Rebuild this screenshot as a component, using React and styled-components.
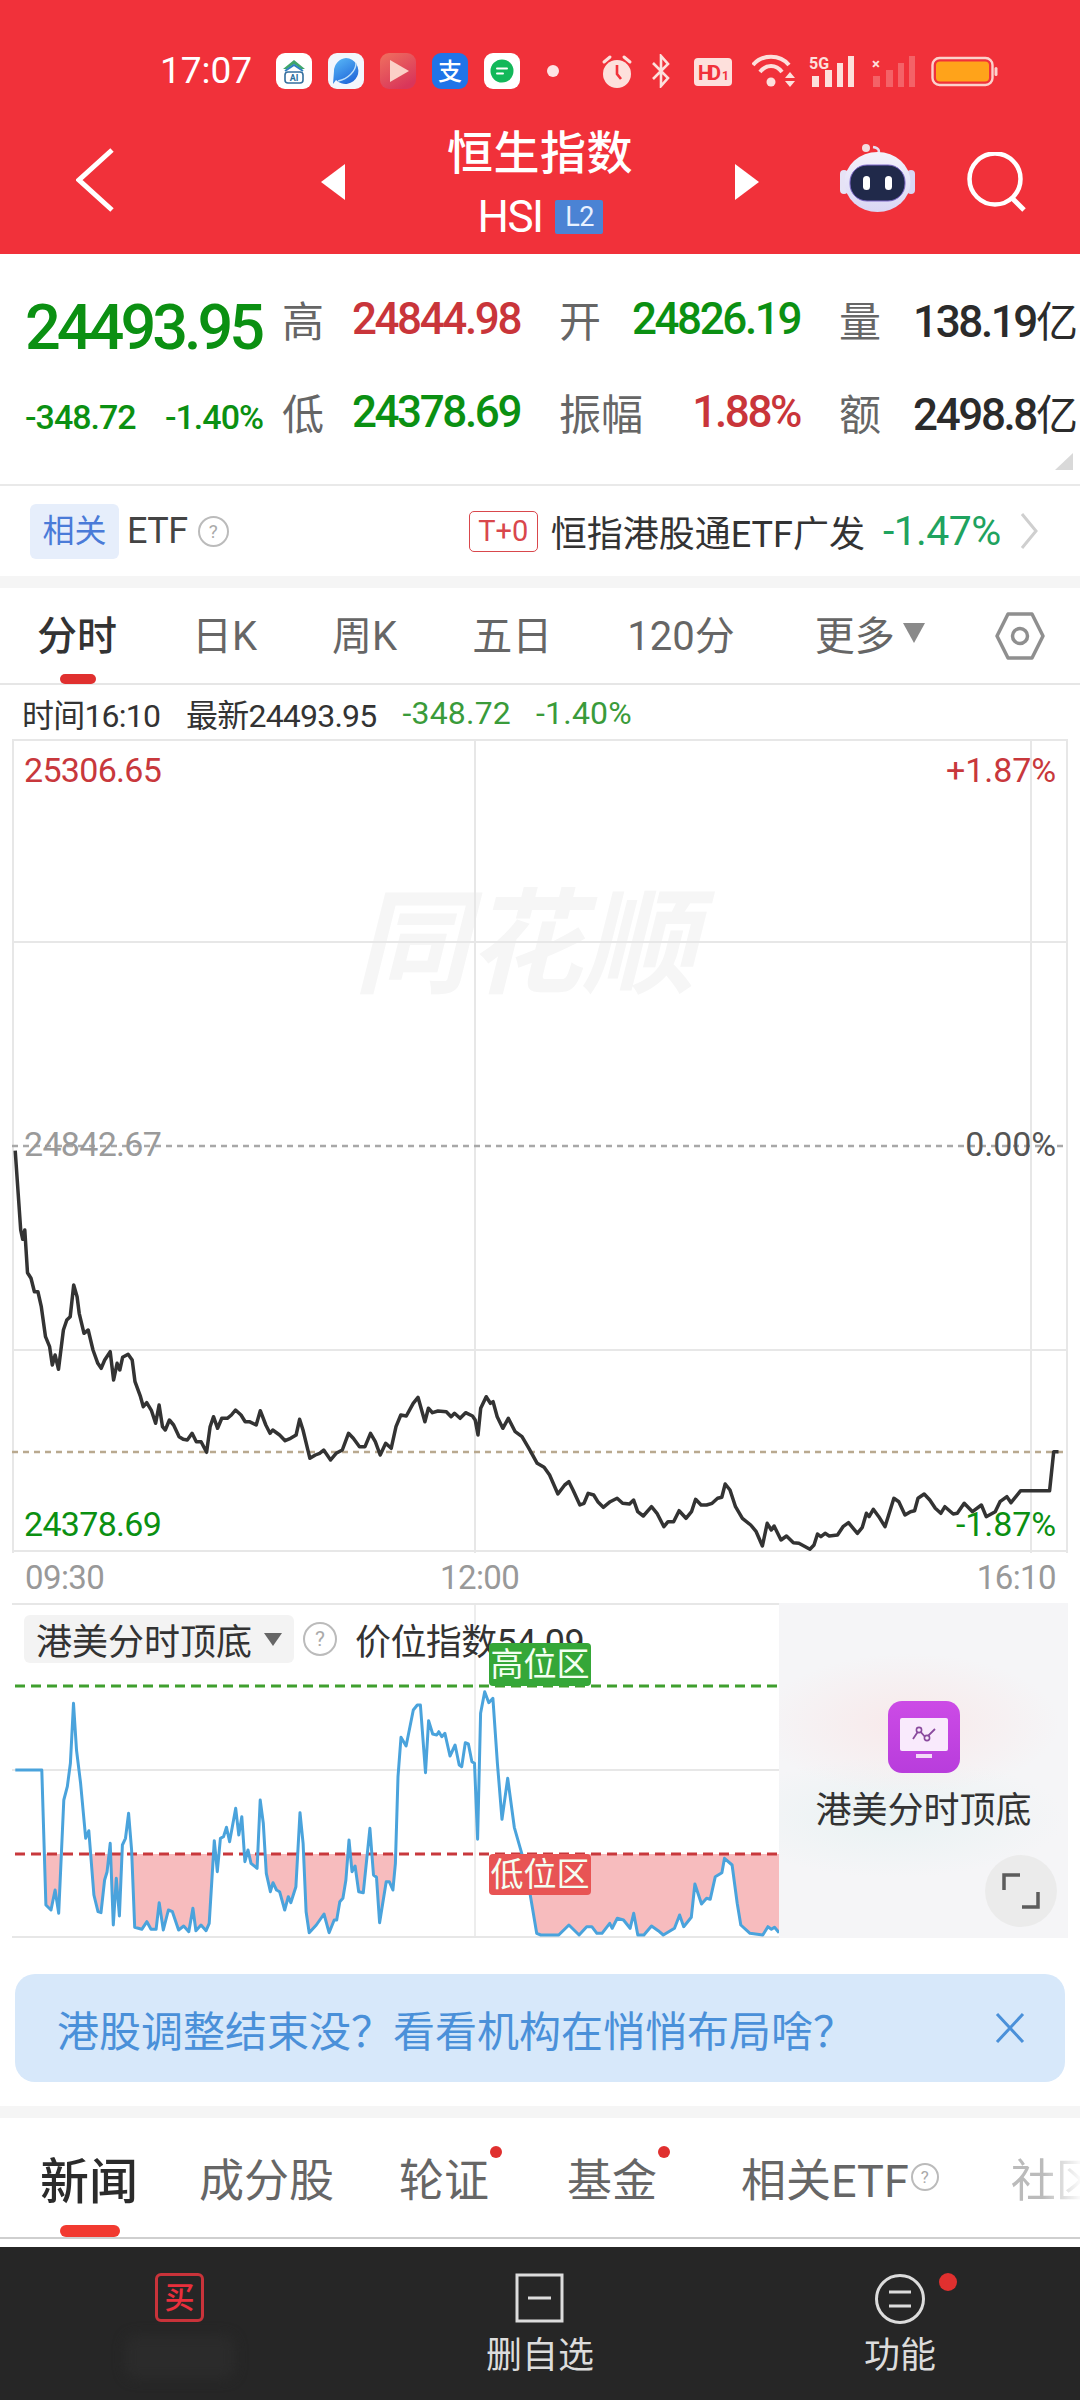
import React from "react";
import styled, { createGlobalStyle } from "styled-components";

const FONT = `Roboto, "Noto Sans CJK SC", sans-serif`;

const GlobalStyle = createGlobalStyle`
    html, body {
        margin: 0;
        padding: 0;
        background: #fff;
    }
    * {
        box-sizing: border-box;
    }
`;

const Page = styled.div`
    width: 1080px;
    height: 2400px;
    overflow: hidden;
    background: #fff;
    font-family: ${FONT};
    color: #333;
    display: flex;
    flex-direction: column;
`;

/* ---------- red header ---------- */

const Header = styled.header`
    height: 254px;
    background: #f1313a;
    color: #fff;
    flex: none;
`;

const StatusBar = styled.div`
    height: 112px;
    padding: 53px 0 0 160px;
    display: flex;
    align-items: flex-start;
`;

const Clock = styled.div`
    width: 92px;
    height: 36px;
    font-size: 37px;
    line-height: 36px;
    color: #fff;
    white-space: nowrap;
`;

const AppIcons = styled.div`
    display: flex;
    gap: 16px;
    margin-left: 24px;
`;

const AppIconBox = styled.svg`
    width: 36px;
    height: 36px;
    display: block;
`;

const NoticeDot = styled.div`
    width: 12px;
    height: 12px;
    border-radius: 50%;
    background: #fde4e4;
    margin: 12px 0 0 27px;
`;

const SysIcon = styled.svg`
    display: block;
    flex: none;
    margin-left: ${(p) => p.$ml}px;
    margin-top: 1px;
`;

const NavRow = styled.div`
    height: 142px;
    display: grid;
    grid-template-columns: 321px 24px 390px 24px 321px;
    align-items: start;
`;

const BackCell = styled.div`
    padding: 36px 0 0 76px;
`;

const ArrowCell = styled.div`
    padding-top: 52px;
`;

const TitleCell = styled.div`
    display: flex;
    flex-direction: column;
    align-items: center;
    padding-top: 15px;
`;

const Title = styled.div`
    font-size: 46px;
    line-height: 52px;
    font-weight: 500;
    letter-spacing: 0.5px;
`;

const SubTitle = styled.div`
    display: flex;
    align-items: center;
    gap: 13px;
    margin-top: 20px;
    padding-left: 1px;
`;

const Code = styled.span`
    font-size: 44px;
    line-height: 36px;
    letter-spacing: -1.5px;
`;

const LevelBadge = styled.span`
    width: 48px;
    height: 34px;
    background: #4b83d4;
    border-radius: 2px;
    color: #e8f1ff;
    font-size: 27px;
    line-height: 34px;
    text-align: center;
    letter-spacing: -0.5px;
`;

const NavTools = styled.div`
    display: flex;
    padding: 32px 0 0 81px;
    gap: 52px;
`;

/* ---------- quote block ---------- */

const Quote = styled.section`
    height: 232px;
    flex: none;
    padding: 18px 0 0 25px;
    border-bottom: 2px solid #e9e9e9;
    position: relative;
    display: grid;
    grid-template-columns: 218px 238px 241px 239px;
    grid-auto-rows: 93px;
    column-gap: 39px;
`;

const LastPrice = styled.div`
    font-size: 63px;
    line-height: 93px;
    padding-top: 9px;
    font-weight: 500;
    color: #0b9012;
    letter-spacing: -4px;
    white-space: nowrap;
`;

const Changes = styled.div`
    display: flex;
    justify-content: space-between;
    width: 238px;
    padding-top: 6px;
    font-size: 34px;
    line-height: 93px;
    font-weight: 500;
    letter-spacing: -1px;
    color: #0b9012;
    white-space: nowrap;
`;

const Stat = styled.div`
    display: flex;
    justify-content: space-between;
    align-items: center;
    white-space: nowrap;
`;

const StatLabel = styled.span`
    font-size: 42px;
    color: #666;
`;

const StatValue = styled.span`
    font-size: 44px;
    font-weight: 500;
    letter-spacing: -2.4px;
    color: ${(p) => p.$color || "#2b2b2b"};
`;

const Unit = styled.span`
    font-weight: 400;
    letter-spacing: 0;
    font-size: 42px;
`;

const CornerMark = styled.div`
    position: absolute;
    right: 7px;
    top: 199px;
    width: 0;
    height: 0;
    border-left: 18px solid transparent;
    border-bottom: 17px solid #d9d9d9;
`;

/* ---------- ETF row ---------- */

const EtfRow = styled.section`
    height: 90px;
    flex: none;
    display: flex;
    align-items: center;
    padding: 0 0 0 30px;
`;

const EtfTag = styled.div`
    width: 89px;
    height: 55px;
    border-radius: 6px;
    background: #e6eefb;
    color: #4a7bd8;
    font-size: 32px;
    line-height: 55px;
    text-align: center;
`;

const EtfLabel = styled.div`
    margin-left: 8px;
    font-size: 36px;
    color: #444;
    letter-spacing: -0.5px;
`;

const HelpMark = styled.span`
    display: inline-flex;
    align-items: center;
    justify-content: center;
    flex: none;
    width: ${(p) => p.$size}px;
    height: ${(p) => p.$size}px;
    border: 2px solid #bbb;
    border-radius: 50%;
    color: #aaa;
    font-size: ${(p) => Math.round(p.$size * 0.62)}px;
    margin-left: ${(p) => p.$ml}px;
`;

const TZeroTag = styled.div`
    margin-left: 240px;
    width: 69px;
    height: 41px;
    border: 1px solid #d9474c;
    border-radius: 5px;
    color: #d9474c;
    font-size: 29px;
    line-height: 39px;
    text-align: center;
`;

const EtfName = styled.div`
    margin-left: 13px;
    font-size: 36px;
    color: #333;
    white-space: nowrap;
`;

const EtfChange = styled.div`
    margin-left: 18px;
    font-size: 41px;
    color: #1fa35f;
    letter-spacing: -0.6px;
    white-space: nowrap;
`;

const SectionGap = styled.div`
    height: 12px;
    flex: none;
    background: #f5f5f5;
`;

/* ---------- period tabs ---------- */

const PeriodTabs = styled.nav`
    height: 97px;
    flex: none;
    position: relative;
    display: flex;
    align-items: flex-start;
    gap: 75px;
    padding: 24px 0 0 37px;
    border-bottom: 2px solid #e6e6e6;
`;

const PeriodTab = styled.div`
    font-size: 40px;
    line-height: 50px;
    color: ${(p) => (p.$active ? "#333" : "#666")};
    font-weight: ${(p) => (p.$active ? 500 : 400)};
    margin-left: ${(p) => p.$ml || 0}px;
    white-space: nowrap;
    display: flex;
    align-items: center;
`;

const MoreArrow = styled.span`
    width: 0;
    height: 0;
    margin: 0 0 8px 8px;
    border-left: 11px solid transparent;
    border-right: 11px solid transparent;
    border-top: 20px solid #8a8a8a;
`;

const PeriodIndicator = styled.div`
    position: absolute;
    left: 60px;
    bottom: -1px;
    width: 36px;
    height: 10px;
    border-radius: 5px;
    background: #e0302f;
`;

const SettingsIcon = styled.svg`
    position: absolute;
    left: 995px;
    top: 24px;
`;

const InfoRow = styled.div`
    height: 54px;
    flex: none;
    display: flex;
    align-items: center;
    padding: 2px 0 0 22px;
    font-size: 32px;
    color: #333;
    letter-spacing: -0.8px;
    white-space: nowrap;
`;

const InfoItem = styled.span`
    margin-left: ${(p) => p.$ml || 0}px;
    color: ${(p) => p.$color || "#333"};
    ${(p) => p.$color && "letter-spacing: 0.2px;"}
`;

/* ---------- main chart ---------- */

const ChartBox = styled.div`
    position: relative;
    flex: none;
    width: 1056px;
    height: 814px;
    margin-left: 12px;
`;

const ChartSvg = styled.svg`
    position: absolute;
    left: 0;
    top: 0;
`;

const Watermark = styled.div`
    position: absolute;
    left: 342px;
    top: 141px;
    font-size: 114px;
    line-height: 130px;
    font-weight: 700;
    font-style: italic;
    color: #f6f6f6;
    white-space: nowrap;
`;

const ChartLabel = styled.div`
    position: absolute;
    top: ${(p) => p.$top}px;
    ${(p) => (p.$right ? "right: 12px; letter-spacing: -0.1px;" : "left: 12px; letter-spacing: -0.7px;")}
    font-size: 34px;
    line-height: 40px;
    color: ${(p) => p.$color};
`;

const AxisRow = styled.div`
    height: 50px;
    flex: none;
    display: grid;
    grid-template-columns: 415px 1fr auto;
    padding: 5px 24px 0 25px;
    font-size: 33px;
    line-height: 40px;
    letter-spacing: -0.6px;
    color: #999;
`;

/* ---------- indicator chart ---------- */

const SubChart = styled.div`
    position: relative;
    flex: none;
    height: 335px;
    margin-left: 12px;
    width: 1056px;
    display: flex;
`;

const SubPlot = styled.div`
    position: relative;
    width: 767px;
    height: 335px;
    flex: none;
`;

const IndicatorHead = styled.div`
    position: absolute;
    left: 12px;
    top: 10px;
    display: flex;
    align-items: center;
`;

const IndicatorSelect = styled.div`
    width: 270px;
    height: 48px;
    border-radius: 6px;
    background: #f3f3f3;
    display: flex;
    align-items: center;
    padding-left: 12px;
    font-size: 36px;
    color: #333;
`;

const SelectArrow = styled.span`
    width: 0;
    height: 0;
    margin-left: 12px;
    border-left: 9px solid transparent;
    border-right: 9px solid transparent;
    border-top: 13px solid #666;
`;

const IndicatorValue = styled.div`
    margin-left: 18px;
    font-size: 36px;
    color: #333;
    letter-spacing: -0.6px;
    white-space: nowrap;
`;

const ZoneBadge = styled.div`
    position: absolute;
    left: 477px;
    top: ${(p) => p.$top}px;
    width: 102px;
    height: ${(p) => p.$h}px;
    background: ${(p) => p.$bg};
    border-radius: 4px;
    color: #f4fff2;
    font-size: 33px;
    line-height: ${(p) => p.$h}px;
    text-align: center;
`;

const SidePanel = styled.div`
    position: relative;
    width: 289px;
    height: 335px;
    background:
        radial-gradient(ellipse 150px 70px at 45% 36%, #f8e9ea 0%, rgba(248, 233, 234, 0) 100%),
        radial-gradient(ellipse 170px 60px at 40% 64%, #e9f2f3 0%, rgba(233, 242, 243, 0) 100%),
        #f5f5f7;
    display: flex;
    flex-direction: column;
    align-items: center;
    padding-top: 98px;
`;

const SideLabel = styled.div`
    margin-top: 16px;
    font-size: 36px;
    line-height: 44px;
    color: #333;
`;

const ExpandButton = styled.div`
    position: absolute;
    right: 11px;
    bottom: 11px;
    width: 72px;
    height: 72px;
    border-radius: 50%;
    background: #ebebeb;
    display: flex;
    align-items: center;
    justify-content: center;
`;

/* ---------- banner ---------- */

const Banner = styled.div`
    flex: none;
    width: 1050px;
    height: 108px;
    margin: 36px 0 24px 15px;
    border-radius: 20px;
    background: #d7e8fa;
    display: flex;
    align-items: center;
    justify-content: space-between;
    padding: 0 40px 0 42px;
    font-size: 42px;
    color: #4a90d9;
    white-space: nowrap;
`;

/* ---------- bottom tabs ---------- */

const NewsTabs = styled.nav`
    position: relative;
    flex: none;
    height: 121px;
    display: flex;
    align-items: flex-start;
    padding: 29px 0 0 40px;
    border-bottom: 2px solid #cfcfcf;
    overflow: hidden;
`;

const NewsTab = styled.div`
    position: relative;
    flex: none;
    display: flex;
    align-items: center;
    height: 60px;
    margin-left: ${(p) => p.$ml || 0}px;
    font-size: ${(p) => (p.$active ? 49 : 45)}px;
    font-weight: ${(p) => (p.$active ? 500 : 400)};
    color: ${(p) => (p.$active ? "#2b2b2b" : "#666")};
    white-space: nowrap;
    ${(p) =>
        p.$fade &&
        `color: #bbb;
        -webkit-mask-image: linear-gradient(90deg, #000 35%, transparent 80%);
        mask-image: linear-gradient(90deg, #000 35%, transparent 80%);`}
`;

const RedDot = styled.span`
    position: absolute;
    right: -13px;
    top: -1px;
    width: 12px;
    height: 12px;
    border-radius: 50%;
    background: #e0302f;
`;

const NewsIndicator = styled.div`
    position: absolute;
    left: 60px;
    bottom: 0;
    width: 60px;
    height: 12px;
    border-radius: 6px;
    background: #f23a30;
`;

const TabFooterGap = styled.div`
    height: 8px;
    flex: none;
    background: #fff;
`;

const BottomBar = styled.footer`
    flex: 1;
    background: #262626;
    display: grid;
    grid-template-columns: 360px 360px 360px;
    padding-top: 26px;
`;

const BarItem = styled.div`
    position: relative;
    display: flex;
    flex-direction: column;
    align-items: center;
    color: #dcdcdc;
    font-size: 36px;
    line-height: 50px;
`;

const BarIconWrap = styled.div`
    width: 50px;
    height: 50px;
    margin-bottom: 8px;
    position: relative;
`;

const BuyIcon = styled.div`
    width: 49px;
    height: 49px;
    border: 3px solid #c9333a;
    border-radius: 6px;
    color: #ea2f3c;
    font-size: 30px;
    line-height: 43px;
    font-weight: 500;
    text-align: center;
`;

const BlurredLabel = styled.div`
    width: 110px;
    height: 44px;
    margin-top: 4px;
    border-radius: 12px;
    background: #2b2b2b;
    filter: blur(6px);
`;

const BadgeDot = styled.span`
    position: absolute;
    left: 64px;
    top: 0;
    width: 18px;
    height: 18px;
    border-radius: 50%;
    background: #e0302f;
`;

/* ---------- data ---------- */

const MAIN_LINE = [[22,92],[30,330],[33,358],[36,330],[40,458],[45,475],[50,515],[55,515],[60,560],[66,650],[72,680],[76,735],[80,705],[85,748],[92,630],[97,600],[102,590],[107,495],[112,530],[115,580],[122,640],[128,630],[135,690],[142,730],[147,745],[152,720],[160,695],[165,780],[170,730],[174,750],[178,712],[186,703],[192,720],[196,785],[204,830],[208,860],[213,848],[220,872],[226,910],[231,855],[236,920],[240,930],[246,900],[252,915],[260,950],[266,958],[272,960],[279,940],[285,965],[292,965],[300,997],[305,920],[310,890],[316,925],[322,895],[330,895],[336,885],[342,870],[350,885],[356,905],[362,905],[372,915],[378,872],[386,915],[392,940],[396,930],[406,945],[414,962],[422,955],[430,945],[435,898],[440,930],[450,1015],[458,1005],[464,1000],[470,990],[480,1020],[488,1000],[497,990],[506,940],[513,955],[522,980],[530,980],[538,940],[545,965],[552,1005],[560,970],[568,985],[575,920],[582,885],[590,888],[600,850],[607,832],[617,905],[622,865],[628,878],[636,873],[648,875],[655,890],[660,880],[668,895],[676,878],[686,888],[690,900],[694,945],[698,865],[706,830],[712,850],[716,845],[722,890],[730,925],[738,895],[748,935],[758,950],[768,985],[780,1030],[790,1042],[798,1065],[810,1122],[820,1095],[826,1085],[832,1110],[842,1155],[848,1150],[854,1120],[862,1125],[868,1145],[876,1162],[886,1145],[896,1135],[904,1150],[914,1152],[920,1140],[926,1175],[934,1188],[946,1160],[954,1180],[964,1220],[970,1205],[978,1205],[986,1172],[996,1195],[1004,1175],[1010,1138],[1018,1155],[1026,1155],[1034,1150],[1042,1135],[1048,1132],[1053,1092],[1060,1110],[1068,1160],[1078,1195],[1090,1215],[1098,1235],[1107,1278],[1114,1210],[1120,1230],[1124,1218],[1134,1260],[1142,1248],[1152,1268],[1160,1270],[1176,1288],[1182,1275],[1187,1242],[1192,1250],[1198,1240],[1204,1248],[1216,1245],[1224,1220],[1232,1208],[1245,1240],[1252,1222],[1258,1180],[1262,1190],[1268,1168],[1276,1190],[1285,1220],[1298,1135],[1305,1145],[1314,1185],[1322,1175],[1328,1172],[1333,1135],[1342,1122],[1350,1140],[1358,1165],[1366,1180],[1372,1160],[1384,1182],[1390,1180],[1400,1150],[1412,1175],[1425,1155],[1432,1190],[1445,1175],[1452,1145],[1462,1130],[1468,1148],[1482,1112],[1524,1112],[1530,995],[1537,995]];

const SUB_LINE = [[30,540],[82,540],[90,945],[100,960],[108,900],[115,970],[125,630],[132,590],[138,520],[144,340],[150,480],[158,580],[168,745],[174,722],[184,915],[192,965],[198,968],[205,870],[210,845],[216,760],[222,1005],[228,865],[234,978],[240,765],[246,745],[252,670],[258,780],[264,1012],[278,1018],[288,995],[296,1018],[306,1018],[312,938],[320,1020],[330,960],[338,965],[350,1020],[360,1008],[370,1025],[378,955],[384,1022],[394,1005],[404,1022],[410,1000],[420,752],[426,845],[432,745],[438,740],[444,712],[450,755],[462,655],[468,735],[474,680],[480,815],[486,780],[492,820],[504,835],[510,630],[516,700],[522,850],[530,905],[535,878],[542,900],[548,905],[558,960],[565,920],[570,938],[580,890],[588,668],[594,760],[600,965],[606,1028],[620,1005],[635,972],[645,1028],[655,990],[660,990],[666,935],[672,925],[678,870],[684,750],[690,845],[696,828],[703,905],[712,908],[725,715],[732,855],[738,862],[744,998],[757,875],[763,875],[770,900],[775,820],[780,560],[786,442],[796,468],[810,360],[818,345],[824,345],[834,548],[840,392],[848,432],[856,435],[860,425],[866,440],[872,430],[882,498],[892,465],[900,525],[905,530],[912,458],[918,462],[925,515],[930,520],[936,748],[942,370],[950,305],[958,338],[966,325],[975,520],[984,688],[995,565],[1008,712],[1030,830],[1052,1030],[1060,1035],[1095,1035],[1115,1005],[1135,1035],[1150,1010],[1160,1010],[1170,1030],[1180,1030],[1195,1000],[1200,1015],[1210,985],[1222,990],[1235,1015],[1242,970],[1250,1035],[1262,1035],[1277,1008],[1290,1022],[1300,1035],[1322,1015],[1332,975],[1340,1010],[1355,982],[1362,882],[1375,942],[1385,925],[1392,928],[1402,860],[1415,848],[1420,805],[1435,825],[1445,940],[1452,1005],[1470,1030],[1495,1035],[1505,1010],[1512,1018],[1518,1012],[1527,1028]];

// traced from crops of the reference, so scale back to chart pixels
const mainPoints = MAIN_LINE.map(([x, y]) => `${(x / 1.452 - 12).toFixed(1)},${(y / 3 + 381).toFixed(1)}`).join(" ");
const subCoords = SUB_LINE.map(([x, y]) => [(x / 1.96 - 12).toFixed(1), (y / 3 - 13).toFixed(1)]);
const subPoints = subCoords.map((c) => c.join(",")).join(" ");
const subArea = `${subPoints} 767,335 767,0 ${subCoords[0][0]},0`;

const PERIODS = ["日K", "周K", "五日", "120分"];

/* ---------- drawings ---------- */

const HomeAiIcon = () => (
    <AppIconBox viewBox="0 0 36 36">
        <rect width="36" height="36" rx="9" fill="#fff" />
        <path d="M7 16 L18 7 L29 16 L25 16 L18 11 L11 16Z" fill="#3fa66b" />
        <path d="M9 18 L18 12 L27 18" fill="none" stroke="#2f7fc4" strokeWidth="2" />
        <rect x="9" y="19" width="18" height="11" rx="3" fill="none" stroke="#356f9e" strokeWidth="1.6" />
        <text x="18" y="28" fontSize="9" fontWeight="700" fill="#2c6f9f" textAnchor="middle" fontFamily="Roboto, sans-serif">AI</text>
    </AppIconBox>
);

const BrowserIcon = () => (
    <AppIconBox viewBox="0 0 36 36">
        <defs>
            <linearGradient id="browserFill" x1="0.2" y1="0" x2="0.8" y2="1">
                <stop offset="0" stopColor="#56b4f6" />
                <stop offset="1" stopColor="#1d63d8" />
            </linearGradient>
        </defs>
        <rect width="36" height="36" rx="9" fill="#f2f6fd" />
        <path d="M18 5 A13 13 0 1 1 8 27 L5 31 L6 18 A13 13 0 0 1 18 5Z" fill="url(#browserFill)" />
        <path d="M28 10 C28 18 20 26 10 28" fill="none" stroke="#bfe0fb" strokeWidth="1.4" />
    </AppIconBox>
);

const PlayerIcon = () => (
    <AppIconBox viewBox="0 0 36 36">
        <defs>
            <linearGradient id="playerFill" x1="0" y1="0" x2="0.6" y2="1">
                <stop offset="0" stopColor="#f0705f" />
                <stop offset="1" stopColor="#d9365a" />
            </linearGradient>
        </defs>
        <rect width="36" height="36" rx="9" fill="url(#playerFill)" />
        <path d="M10 7 L29 18 L10 29Z" fill="#fbd0c8" />
    </AppIconBox>
);

const AlipayIcon = () => (
    <AppIconBox viewBox="0 0 36 36">
        <rect width="36" height="36" rx="9" fill="#1f74e8" />
        <text x="18" y="27" fontSize="24" fontWeight="500" fill="#fff" textAnchor="middle" fontFamily="'Noto Sans CJK SC', sans-serif">支</text>
    </AppIconBox>
);

const ChatIcon = () => (
    <AppIconBox viewBox="0 0 36 36">
        <rect width="36" height="36" rx="9" fill="#fff" />
        <circle cx="18" cy="18" r="11.5" fill="#12b85a" />
        <rect x="12" y="14.5" width="12" height="2" rx="1" fill="#fff" />
        <rect x="12" y="19.5" width="8" height="2" rx="1" fill="#fff" />
    </AppIconBox>
);

const AlarmIcon = () => (
    <SysIcon $ml={42} width="32" height="35" viewBox="0 0 32 35">
        <circle cx="16" cy="20" r="14" fill="#fde0dc" />
        <path d="M16 11 V20 L20 25" fill="none" stroke="#f1313a" strokeWidth="2.6" />
        <path d="M3 8 L9 3 M29 8 L23 3" stroke="#fde0dc" strokeWidth="3" strokeLinecap="round" />
    </SysIcon>
);

const BluetoothIcon = () => (
    <SysIcon $ml={18} width="20" height="34" viewBox="0 0 20 34">
        <path d="M2 9 L17 24 L10 32 V2 L17 10 L2 25" fill="none" stroke="#fde0dc" strokeWidth="2.6" />
    </SysIcon>
);

const HdIcon = () => (
    <SysIcon $ml={23} width="38" height="34" viewBox="0 0 38 34">
        <rect y="4" width="38" height="28" rx="4" fill="#fde0dc" />
        <text x="4" y="26" fontSize="20" fontWeight="700" fill="#f1313a" fontFamily="Roboto, sans-serif" textLength="23">HD</text>
        <text x="28" y="26" fontSize="12" fontWeight="700" fill="#f1313a" fontFamily="Roboto, sans-serif">1</text>
    </SysIcon>
);

const WifiIcon = () => (
    <SysIcon $ml={20} width="44" height="34" viewBox="0 0 44 34">
        <path d="M1 11 C10 0 28 0 37 11" fill="none" stroke="#fde0dc" strokeWidth="4" />
        <path d="M8 18 C14 10 24 10 30 18" fill="none" stroke="#fde0dc" strokeWidth="4" />
        <circle cx="19" cy="28" r="4.5" fill="#fde0dc" />
        <path d="M33 24 L38 18 L43 24Z M33 27 L43 27 L38 33Z" fill="#fde0dc" />
    </SysIcon>
);

const SignalIcon = ({ ml, dim, label }) => (
    <SysIcon $ml={ml} width="46" height="34" viewBox="0 0 46 34">
        <g fill="#fde0dc" opacity={dim ? 0.28 : 1}>
            <rect x="3" y="22" width="7" height="11" />
            <rect x="16" y="16" width="7" height="17" />
            <rect x="28" y="9" width="6" height="24" />
            <rect x="39" y="2" width="6" height="31" />
        </g>
        <text x={dim ? 2 : 0} y="15" fontSize={dim ? 15 : 16} fontWeight="700" fill="#fde0dc" fontFamily="Roboto, sans-serif">{label}</text>
    </SysIcon>
);

const BatteryIcon = () => (
    <SysIcon $ml={15} width="67" height="34" viewBox="0 0 67 34">
        <rect x="1.5" y="4" width="60" height="27" rx="7" fill="none" stroke="#fcd2cc" strokeWidth="2.4" />
        <rect x="5" y="7.5" width="53" height="20" rx="4" fill="#ffa31a" />
        <rect x="63.5" y="13" width="3" height="9" rx="1.5" fill="#fcd2cc" />
    </SysIcon>
);

const BackIcon = () => (
    <svg width="38" height="64" viewBox="0 0 38 64" style={{ display: "block" }}>
        <path d="M36 2 L3 32 L36 62" fill="none" stroke="#fff" strokeWidth="5" />
    </svg>
);

const SideArrow = ({ flip }) => (
    <svg width="24" height="36" viewBox="0 0 24 36" style={{ display: "block" }}>
        <path d={flip ? "M0 0 L24 18 L0 36Z" : "M24 0 L0 18 L24 36Z"} fill="#fff" />
    </svg>
);

const RobotIcon = () => (
    <svg width="75" height="70" viewBox="0 0 75 70" style={{ display: "block" }}>
        <defs>
            <linearGradient id="robotShell" x1="0" y1="0" x2="0" y2="1">
                <stop offset="0" stopColor="#f4f2fb" />
                <stop offset="1" stopColor="#d9d6f4" />
            </linearGradient>
        </defs>
        <path d="M37 12 C40 8 40 4 33 3" fill="none" stroke="#e6dff0" strokeWidth="2.5" />
        <circle cx="26" cy="4" r="4" fill="#f3dcdf" />
        <rect x="0" y="26" width="8" height="24" rx="4" fill="#e6e3f5" />
        <rect x="67" y="26" width="8" height="24" rx="4" fill="#d9d6f4" />
        <ellipse cx="37.5" cy="38" rx="33" ry="30" fill="url(#robotShell)" />
        <rect x="10" y="21" width="55" height="36" rx="17" fill="#20294a" stroke="#7d68c9" strokeWidth="1" />
        <rect x="23" y="32" width="7" height="14" rx="3.5" fill="#fff" />
        <rect x="45" y="32" width="7" height="14" rx="3.5" fill="#fff" />
    </svg>
);

const SearchIcon = () => (
    <svg width="62" height="62" viewBox="0 0 62 62" style={{ display: "block", marginTop: 8 }}>
        <circle cx="28" cy="27" r="25.5" fill="none" stroke="#fff" strokeWidth="4.5" />
        <path d="M45 46 L57 58" stroke="#fff" strokeWidth="5" />
    </svg>
);

const ChevronIcon = () => (
    <svg width="20" height="38" viewBox="0 0 20 38" style={{ display: "block", marginLeft: 18 }}>
        <path d="M3 2 L17 19 L3 36" fill="none" stroke="#cfcfcf" strokeWidth="3" />
    </svg>
);

const HexIcon = () => (
    <SettingsIcon width="50" height="48" viewBox="0 0 50 48">
        <path d="M13 2 H37 L48 24 L37 46 H13 L2 24Z" fill="none" stroke="#8f8f8f" strokeWidth="3.5" strokeLinejoin="round" />
        <circle cx="25" cy="24" r="7.5" fill="none" stroke="#8f8f8f" strokeWidth="3.5" />
    </SettingsIcon>
);

const MainChartDrawing = () => (
    <ChartSvg width="1056" height="814" viewBox="0 0 1056 814">
        <g stroke="#e7e7e7" strokeWidth="2" fill="none">
            <path d="M0 1 H1056" />
            <path d="M0 203 H1056" />
            <path d="M0 611 H1056" />
            <path d="M0 812 H1056" />
            <path d="M463 0 V814" />
            <path d="M1019 0 V814" />
            <path d="M1 0 V814" />
            <path d="M1055 0 V814" />
        </g>
        <path d="M0 407 H1056" stroke="#a8a8a8" strokeWidth="2.5" strokeDasharray="6 5" fill="none" />
        <path d="M0 713 H1056" stroke="#b9a98f" strokeWidth="2.5" strokeDasharray="6 5" fill="none" />
        <polyline points={mainPoints} fill="none" stroke="#333" strokeWidth="3.5" strokeLinejoin="round" />
    </ChartSvg>
);

const SubChartDrawing = () => (
    <ChartSvg width="767" height="335" viewBox="0 0 767 335">
        <defs>
            <clipPath id="lowZone">
                <rect x="0" y="251" width="767" height="84" />
            </clipPath>
        </defs>
        <g stroke="#e7e7e7" strokeWidth="2" fill="none">
            <path d="M0 1 H767" />
            <path d="M0 167 H767" />
            <path d="M0 334 H767" />
            <path d="M463 0 V335" strokeWidth="1.5" />
        </g>
        <polygon points={subArea} fill="#f7bcbe" clipPath="url(#lowZone)" />
        <path d="M3 83 H767" stroke="#3f9f2e" strokeWidth="3" strokeDasharray="10 6" fill="none" />
        <path d="M3 251 H767" stroke="#c8383c" strokeWidth="3" strokeDasharray="10 6" fill="none" />
        <polyline points={subPoints} fill="none" stroke="#4aa3dc" strokeWidth="3" strokeLinejoin="round" />
    </ChartSvg>
);

const MonitorBadge = () => (
    <svg width="72" height="72" viewBox="0 0 72 72" style={{ display: "block" }}>
        <defs>
            <linearGradient id="badgeFill" x1="0" y1="0" x2="0" y2="1">
                <stop offset="0" stopColor="#cc4be6" />
                <stop offset="1" stopColor="#b83ddc" />
            </linearGradient>
        </defs>
        <rect width="72" height="72" rx="14" fill="url(#badgeFill)" />
        <rect x="12" y="17" width="48" height="33" rx="2" fill="#f9eafc" />
        <rect x="28" y="53" width="16" height="4" fill="#f3d9f8" />
        <path d="M25 38 L31 29 L38 37 L47 28" fill="none" stroke="#8a4a9e" strokeWidth="1.8" />
        <circle cx="31" cy="29" r="2.6" fill="#f9eafc" stroke="#8a4a9e" strokeWidth="1.6" />
        <circle cx="39" cy="37" r="2.6" fill="#f9eafc" stroke="#8a4a9e" strokeWidth="1.6" />
    </svg>
);

const ExpandIcon = () => (
    <svg width="38" height="38" viewBox="0 0 38 38" style={{ display: "block" }}>
        <path d="M2 18 V3 H18 M36 20 V35 H20" fill="none" stroke="#5c5c5c" strokeWidth="3.5" />
    </svg>
);

const CloseIcon = () => (
    <svg width="30" height="32" viewBox="0 0 30 32" style={{ display: "block" }}>
        <path d="M2 2 L28 30 M28 2 L2 30" stroke="#4a90d9" strokeWidth="3" />
    </svg>
);

const RemoveWatchIcon = () => (
    <svg width="50" height="50" viewBox="0 0 50 50" style={{ display: "block" }}>
        <rect x="2" y="2" width="45" height="46" fill="none" stroke="#dcdcdc" strokeWidth="3" />
        <path d="M13 25 H36" stroke="#dcdcdc" strokeWidth="3" />
    </svg>
);

const MenuIcon = () => (
    <svg width="50" height="52" viewBox="0 0 50 52" style={{ display: "block" }}>
        <circle cx="25" cy="26" r="23.5" fill="none" stroke="#dcdcdc" strokeWidth="3" />
        <path d="M14 19 H36 M14 33 H36" stroke="#dcdcdc" strokeWidth="3" />
    </svg>
);

const App = () => {
    return (
        <Page>
            <GlobalStyle />

            <Header>
                <StatusBar>
                    <Clock>17:07</Clock>
                    <AppIcons>
                        <HomeAiIcon />
                        <BrowserIcon />
                        <PlayerIcon />
                        <AlipayIcon />
                        <ChatIcon />
                    </AppIcons>
                    <NoticeDot />
                    <AlarmIcon />
                    <BluetoothIcon />
                    <HdIcon />
                    <WifiIcon />
                    <SignalIcon ml={13} label="5G" />
                    <SignalIcon ml={15} dim label="×" />
                    <BatteryIcon />
                </StatusBar>
                <NavRow>
                    <BackCell>
                        <BackIcon />
                    </BackCell>
                    <ArrowCell>
                        <SideArrow />
                    </ArrowCell>
                    <TitleCell>
                        <Title>恒生指数</Title>
                        <SubTitle>
                            <Code>HSI</Code>
                            <LevelBadge>L2</LevelBadge>
                        </SubTitle>
                    </TitleCell>
                    <ArrowCell>
                        <SideArrow flip />
                    </ArrowCell>
                    <NavTools>
                        <RobotIcon />
                        <SearchIcon />
                    </NavTools>
                </NavRow>
            </Header>

            <Quote>
                <LastPrice>24493.95</LastPrice>
                <Stat>
                    <StatLabel>高</StatLabel>
                    <StatValue $color="#c9353a">24844.98</StatValue>
                </Stat>
                <Stat>
                    <StatLabel>开</StatLabel>
                    <StatValue $color="#0b9012">24826.19</StatValue>
                </Stat>
                <Stat>
                    <StatLabel>量</StatLabel>
                    <StatValue>138.19<Unit>亿</Unit></StatValue>
                </Stat>
                <Changes>
                    <span>-348.72</span>
                    <span>-1.40%</span>
                </Changes>
                <Stat>
                    <StatLabel>低</StatLabel>
                    <StatValue $color="#0b9012">24378.69</StatValue>
                </Stat>
                <Stat>
                    <StatLabel>振幅</StatLabel>
                    <StatValue $color="#c9353a">1.88%</StatValue>
                </Stat>
                <Stat>
                    <StatLabel>额</StatLabel>
                    <StatValue>2498.8<Unit>亿</Unit></StatValue>
                </Stat>
                <CornerMark />
            </Quote>

            <EtfRow>
                <EtfTag>相关</EtfTag>
                <EtfLabel>ETF</EtfLabel>
                <HelpMark $size={31} $ml={10}>?</HelpMark>
                <TZeroTag>T+0</TZeroTag>
                <EtfName>恒指港股通ETF广发</EtfName>
                <EtfChange>-1.47%</EtfChange>
                <ChevronIcon />
            </EtfRow>
            <SectionGap />

            <PeriodTabs>
                <PeriodTab $active>分时</PeriodTab>
                {PERIODS.map((p) => (
                    <PeriodTab key={p}>{p}</PeriodTab>
                ))}
                <PeriodTab $ml={5}>
                    更多
                    <MoreArrow />
                </PeriodTab>
                <HexIcon />
                <PeriodIndicator />
            </PeriodTabs>

            <InfoRow>
                <InfoItem>时间16:10</InfoItem>
                <InfoItem $ml={26}>最新24493.95</InfoItem>
                <InfoItem $ml={26} $color="#3a9b3a">-348.72</InfoItem>
                <InfoItem $ml={25} $color="#3a9b3a">-1.40%</InfoItem>
            </InfoRow>

            <ChartBox>
                <Watermark>同花顺</Watermark>
                <MainChartDrawing />
                <ChartLabel $top={11} $color="#c8383c">25306.65</ChartLabel>
                <ChartLabel $top={11} $right $color="#c8383c">+1.87%</ChartLabel>
                <ChartLabel $top={385} $color="#9a9a9a">24842.67</ChartLabel>
                <ChartLabel $top={385} $right $color="#555">0.00%</ChartLabel>
                <ChartLabel $top={765} $color="#0b9012">24378.69</ChartLabel>
                <ChartLabel $top={765} $right $color="#0b9012">-1.87%</ChartLabel>
            </ChartBox>

            <AxisRow>
                <span>09:30</span>
                <span>12:00</span>
                <span>16:10</span>
            </AxisRow>

            <SubChart>
                <SubPlot>
                    <SubChartDrawing />
                    <IndicatorHead>
                        <IndicatorSelect>
                            港美分时顶底
                            <SelectArrow />
                        </IndicatorSelect>
                        <HelpMark $size={34} $ml={9}>?</HelpMark>
                        <IndicatorValue>价位指数54.09</IndicatorValue>
                    </IndicatorHead>
                    <ZoneBadge $top={40} $h={43} $bg="#35a738">高位区</ZoneBadge>
                    <ZoneBadge $top={251} $h={41} $bg="#e85454">低位区</ZoneBadge>
                </SubPlot>
                <SidePanel>
                    <MonitorBadge />
                    <SideLabel>港美分时顶底</SideLabel>
                    <ExpandButton>
                        <ExpandIcon />
                    </ExpandButton>
                </SidePanel>
            </SubChart>

            <Banner>
                <span>港股调整结束没？看看机构在悄悄布局啥？</span>
                <CloseIcon />
            </Banner>
            <SectionGap />

            <NewsTabs>
                <NewsTab $active>新闻</NewsTab>
                <NewsTab $ml={61}>成分股</NewsTab>
                <NewsTab $ml={65}>轮证<RedDot /></NewsTab>
                <NewsTab $ml={78}>基金<RedDot /></NewsTab>
                <NewsTab $ml={84}>
                    相关ETF
                    <HelpMark $size={28} $ml={2}>?</HelpMark>
                </NewsTab>
                <NewsTab $ml={72} $fade>社区</NewsTab>
                <NewsIndicator />
            </NewsTabs>
            <TabFooterGap />

            <BottomBar>
                <BarItem>
                    <BarIconWrap>
                        <BuyIcon>买</BuyIcon>
                    </BarIconWrap>
                    <BlurredLabel />
                </BarItem>
                <BarItem>
                    <BarIconWrap>
                        <RemoveWatchIcon />
                    </BarIconWrap>
                    删自选
                </BarItem>
                <BarItem>
                    <BarIconWrap>
                        <MenuIcon />
                        <BadgeDot />
                    </BarIconWrap>
                    功能
                </BarItem>
            </BottomBar>
        </Page>
    );
};

export default App;
